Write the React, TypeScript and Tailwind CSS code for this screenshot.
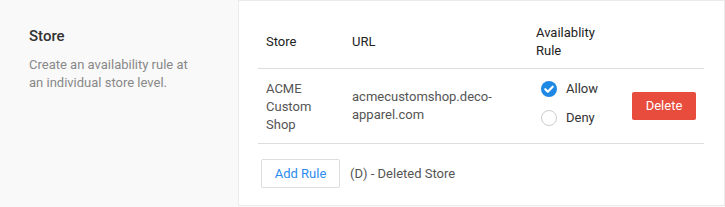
import { useState } from "react";

export default function App() {
  const [rule, setRule] = useState<"allow" | "deny">("allow");

  return (
    <div
      className="flex w-[725px] h-[207px] bg-[#f9f9f9] text-[13px]"
      style={{ fontFamily: "Roboto, 'Noto Sans', sans-serif" }}
    >
      <div className="w-[238px] shrink-0 pl-[29px] pr-4 pt-[26px]">
        <h2 className="text-[15px] leading-[20px] font-medium text-[#333]">Store</h2>
        <p className="mt-[10px] leading-[18px] text-[#888] w-[168px]">
          Create an availability rule at an individual store level.
        </p>
      </div>

      <div className="w-[487px] h-[206px] bg-white border border-[#ebebeb] px-[19px] pt-[15px]">
        <table className="w-[446px] table-fixed border-collapse leading-[18px]">
          <colgroup>
            <col className="w-[86px]" />
            <col className="w-[184px]" />
            <col className="w-[96px]" />
            <col className="w-[80px]" />
          </colgroup>
          <thead>
            <tr className="border-b border-[#ddd] text-left text-[#222]">
              <th className="px-2 py-2 font-normal align-middle">Store</th>
              <th className="px-2 py-2 font-normal align-middle">URL</th>
              <th className="px-2 py-2 font-normal align-middle">Availablity Rule</th>
              <th className="px-2 py-2"></th>
            </tr>
          </thead>
          <tbody>
            <tr className="border-b border-[#ddd] text-[#555]">
              <td className="px-2 pt-[11px] pb-[9px] align-middle">ACME Custom Shop</td>
              <td className="px-2 py-[10px] align-middle break-words">
                acmecustomshop.deco-apparel.com
              </td>
              <td className="px-2 py-[10px] align-middle">
                <div className="flex flex-col gap-[11px] pl-[5px] pb-[5px] text-[#333]">
                  <label className="flex items-center gap-[9px] cursor-pointer" onClick={() => setRule("allow")}>
                    <Radio checked={rule === "allow"} />
                    <span>Allow</span>
                  </label>
                  <label className="flex items-center gap-[9px] cursor-pointer" onClick={() => setRule("deny")}>
                    <Radio checked={rule === "deny"} />
                    <span>Deny</span>
                  </label>
                </div>
              </td>
              <td className="px-2 py-[10px] align-middle">
                <button className="w-[64px] h-[28px] rounded-[2px] bg-[#e74c3c] text-white text-[13px]">
                  Delete
                </button>
              </td>
            </tr>
          </tbody>
        </table>

        <div className="flex items-center mt-[15px] pl-[3px]">
          <button className="h-[29px] w-[79px] border border-[#ddd] rounded-[2px] bg-white text-[#2d8cf0]">
            Add Rule
          </button>
          <span className="ml-[10px] text-[#555]">(D) - Deleted Store</span>
        </div>
      </div>
    </div>
  );
}

function Radio({ checked }: { checked: boolean }) {
  if (checked) {
    return (
      <svg width="16" height="16" viewBox="0 0 16 16" className="shrink-0">
        <circle cx="8" cy="8" r="8" fill="#1e88e5" />
        <path d="M4.3 8.2l2.5 2.5 4.9-5" fill="none" stroke="#fff" strokeWidth="2.2" strokeLinecap="round" strokeLinejoin="round" />
      </svg>
    );
  }
  return (
    <svg width="16" height="16" viewBox="0 0 16 16" className="shrink-0">
      <circle cx="8" cy="8" r="7.5" fill="#fff" stroke="#ccc" strokeWidth="1" />
    </svg>
  );
}
